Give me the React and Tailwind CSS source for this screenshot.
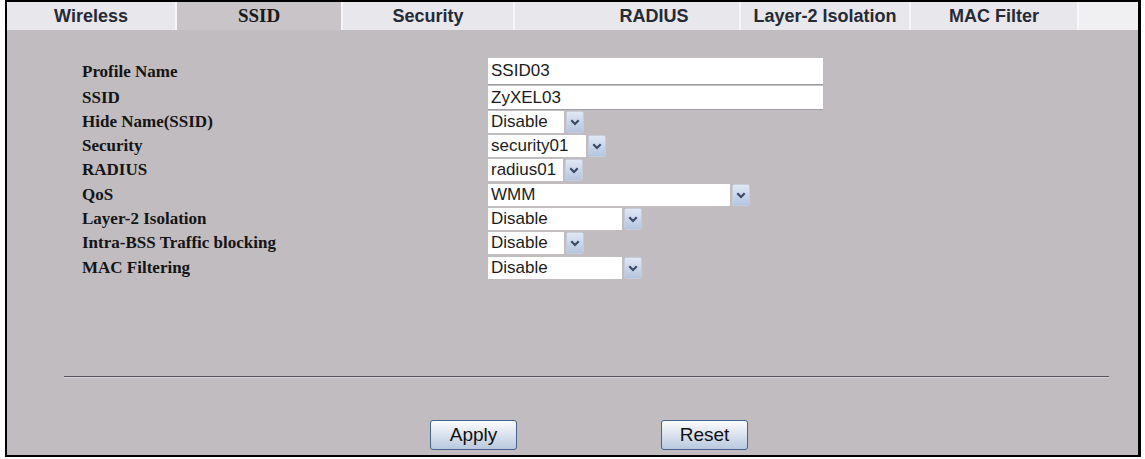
import React from 'react'

const sans = "font-['Liberation_Sans',Arial,sans-serif]"
const serif = "font-['Liberation_Serif','Times_New_Roman',serif]"

const tabs = [
  { name: 'Wireless', w: 'w-[168px]' },
  { name: 'SSID', w: 'w-[166px]', active: true },
  { name: 'Security', w: 'w-[172px]' },
  { name: 'RADIUS', w: 'w-[226px]', shift: 'pl-[54px]' },
  { name: 'Layer-2 Isolation', w: 'w-[170px]' },
  { name: 'MAC Filter', w: 'w-[168px]' },
]

const rows = [
  { label: 'Profile Name', type: 'text', value: 'SSID03', h: 'h-[27px]' },
  { label: 'SSID', type: 'text', value: 'ZyXEL03', h: 'h-[24px]', gap: 'mt-[1px]' },
  { label: 'Hide Name(SSID)', type: 'select', value: 'Disable', w: 'w-[76px]', gap: 'mt-[1px]' },
  { label: 'Security', type: 'select', value: 'security01', w: 'w-[98px]', gap: 'mt-[2px]' },
  { label: 'RADIUS', type: 'select', value: 'radius01', w: 'w-[75px]', gap: 'mt-[2px]' },
  { label: 'QoS', type: 'select', value: 'WMM', w: 'w-[242px]', gap: 'mt-[3px]' },
  { label: 'Layer-2 Isolation', type: 'select', value: 'Disable', w: 'w-[134px]', gap: 'mt-[2px]' },
  { label: 'Intra-BSS Traffic blocking', type: 'select', value: 'Disable', w: 'w-[76px]', gap: 'mt-[2px]' },
  { label: 'MAC Filtering', type: 'select', value: 'Disable', w: 'w-[134px]', gap: 'mt-[3px]' },
]

function Arrow() {
  return (
    <div className="ml-[2px] w-[18px] h-full flex items-center justify-center rounded-[2px] border border-[#c6ccd8] bg-gradient-to-b from-[#e0e8f5] to-[#b3c5df]">
      <svg width="10" height="7" viewBox="0 0 10 7">
        <polyline points="1.3,1.3 5,5 8.7,1.3" fill="none" stroke="#3b4868" strokeWidth="2.2" />
      </svg>
    </div>
  )
}

function Field({ row }) {
  if (row.type === 'text') {
    return (
      <div className={`w-[335px] h-full bg-white border-b border-[#a19ea4] pl-[3px] flex items-center text-[17px] text-[#1c1c1c] ${sans}`}>
        {row.value}
      </div>
    )
  }
  return (
    <div className="flex h-full">
      <div className={`${row.w} h-full bg-white pl-[3px] flex items-center text-[17px] text-[#1c1c1c] ${sans}`}>
        {row.value}
      </div>
      <Arrow />
    </div>
  )
}

export default function App() {
  return (
    <div className="w-[1145px] h-[459px] bg-white">
      <div className="ml-[5px] w-[1136px] h-[457px] border-t-2 border-l-2 border-r-[3px] border-b-[2px] border-black bg-[#c0bcc0] flex flex-col">
        {/* Tabs */}
        <div className="flex h-[28px] bg-[#e8e7eb]">
          {tabs.map((t, i) => (
            <div
              key={t.name}
              className={`${t.w} ${t.shift || ''} shrink-0 flex items-center justify-center font-bold ${
                i > 0 ? 'border-l-2 border-[#f6f6f8]' : ''
              } ${t.active ? `bg-[#c8c4c8] text-[19px] text-[#1a1a1a] ${serif}` : `text-[18px] text-[#262a36] ${sans}`}`}
            >
              {t.name}
            </div>
          ))}
          <div className="flex-1 border-l-2 border-[#f6f6f8] bg-[#f0f0f2]" />
        </div>

        {/* Form */}
        <div className="mt-[28px] flex flex-col">
          {rows.map((row) => (
            <div
              key={row.label}
              className={`flex items-center pl-[75px] ${row.h || 'h-[22px]'} ${row.gap || ''}`}
            >
              <div className={`w-[406px] font-bold text-[17px] text-[#141414] ${serif}`}>{row.label}</div>
              <Field row={row} />
            </div>
          ))}
        </div>

        {/* Divider */}
        <div className="mt-[97px] ml-[57px] mr-[29px] h-[2px] bg-[#56545a] border-b border-[#d6d4d8]" />

        {/* Buttons */}
        <div className="mt-[42px] flex pl-[423px]">
          <button className={`w-[87px] h-[30px] rounded-[3px] border border-[#46638f] bg-gradient-to-b from-[#fcfcfd] to-[#b9c8df] text-[19px] text-[#111] ${sans}`}>
            Apply
          </button>
          <button className={`ml-[144px] w-[87px] h-[30px] rounded-[3px] border border-[#46638f] bg-gradient-to-b from-[#fcfcfd] to-[#b9c8df] text-[19px] text-[#111] ${sans}`}>
            Reset
          </button>
        </div>
      </div>
    </div>
  )
}
